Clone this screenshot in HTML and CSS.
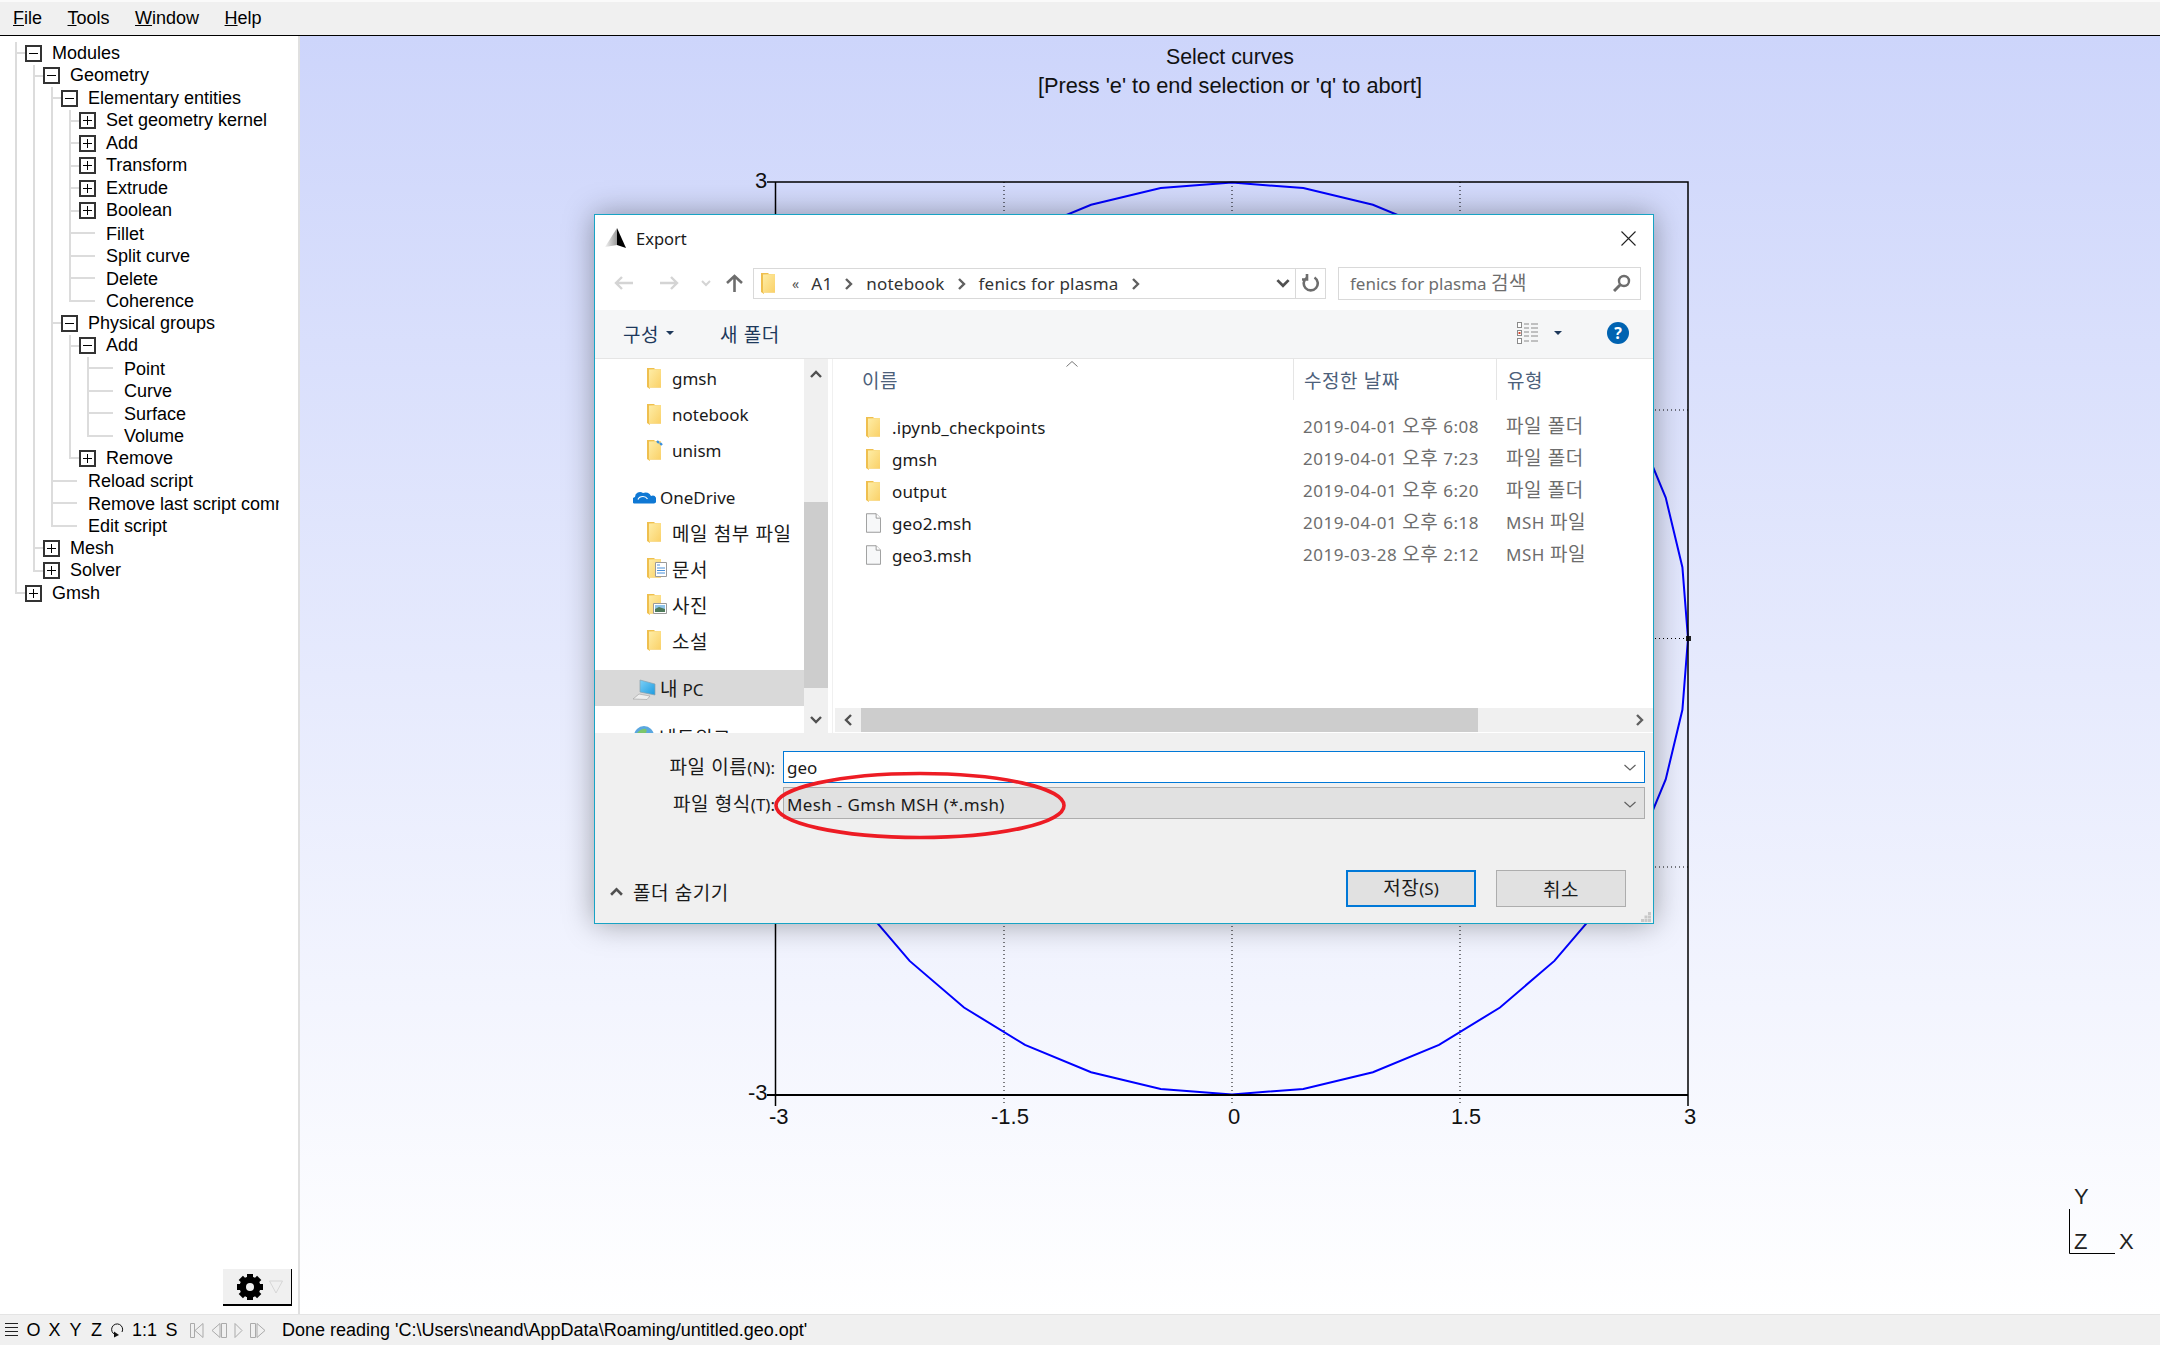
FILE: index.html
```html
<!DOCTYPE html>
<html lang="ko">
<head>
  <meta charset="UTF-8" />
  <title>Gmsh</title>
  <link rel="stylesheet" href="styles.css">
</head>
<body>

  <!-- shared icons -->
  <svg class="sprite" aria-hidden="true">
    <defs>
      <linearGradient id="folderFront" x1="0" y1="0" x2="1" y2="1">
        <stop offset="0" stop-color="#feeda6"/>
        <stop offset="1" stop-color="#fad066"/>
      </linearGradient>
      <linearGradient id="sail" x1="0" y1="0" x2="1" y2="0">
        <stop offset="0" stop-color="#f4f4f4"/>
        <stop offset="1" stop-color="#9a9a9a"/>
      </linearGradient>
      <linearGradient id="screen" x1="0" y1="0" x2="1" y2="1">
        <stop offset="0" stop-color="#7cd0f7"/>
        <stop offset="1" stop-color="#1d9be0"/>
      </linearGradient>
    </defs>
    <symbol id="folder" viewBox="0 0 15 21">
      <path d="M0 0h7l1 1h6v18.500H3V21L0 19z" fill="#efbf4e"/>
      <path d="M2 1.500l12-.5v18.500H2.500L2 20.500z" fill="url(#folderFront)"/>
    </symbol>
    <symbol id="doc" viewBox="0 0 17 22">
      <path d="M.5.500h11l5 5v16H.5z" fill="#f7f8f9" stroke="#8f8f8f"/>
      <path d="M11.500.500v5h5" fill="#fff" stroke="#8f8f8f"/>
    </symbol>
    <symbol id="chevron-up" viewBox="0 0 12 8">
      <path d="M1 7l5-5 5 5" fill="none" stroke="#505050" stroke-width="2.400"/>
    </symbol>
    <symbol id="chevron-down" viewBox="0 0 12 8">
      <path d="M1 1l5 5 5-5" fill="none" stroke="#505050" stroke-width="2.400"/>
    </symbol>
    <symbol id="chevron-left" viewBox="0 0 8 12">
      <path d="M7 1L2 6l5 5" fill="none" stroke="#505050" stroke-width="2.400"/>
    </symbol>
    <symbol id="chevron-right" viewBox="0 0 8 12">
      <path d="M1 1l5 5-5 5" fill="none" stroke="#606060" stroke-width="2.400"/>
    </symbol>
    <symbol id="combo-arrow" viewBox="0 0 12 7">
      <path d="M.5 1l5.500 5 5.500-5" fill="none" stroke="#606060" stroke-width="1.200"/>
    </symbol>
  </svg>

  <div class="menubar">
    <span class="menu-item"><u>F</u>ile</span>
    <span class="menu-item"><u>T</u>ools</span>
    <span class="menu-item"><u>W</u>indow</span>
    <span class="menu-item"><u>H</u>elp</span>
  </div>

  <div class="main">

    <div class="tree-panel">
      <ul class="tree">
        <li>
          <div class="row"><span class="toggle"></span>Modules</div>
          <ul>
            <li>
              <div class="row"><span class="toggle"></span>Geometry</div>
              <ul>
                <li>
                  <div class="row"><span class="toggle"></span>Elementary entities</div>
                  <ul>
                    <li><div class="row"><span class="toggle plus"></span>Set geometry kernel</div></li>
                    <li><div class="row"><span class="toggle plus"></span>Add</div></li>
                    <li><div class="row"><span class="toggle plus"></span>Transform</div></li>
                    <li><div class="row"><span class="toggle plus"></span>Extrude</div></li>
                    <li><div class="row"><span class="toggle plus"></span>Boolean</div></li>
                    <li><div class="row leaf">Fillet</div></li>
                    <li><div class="row leaf">Split curve</div></li>
                    <li><div class="row leaf">Delete</div></li>
                    <li><div class="row leaf">Coherence</div></li>
                  </ul>
                </li>
                <li>
                  <div class="row"><span class="toggle"></span>Physical groups</div>
                  <ul>
                    <li>
                      <div class="row"><span class="toggle"></span>Add</div>
                      <ul>
                        <li><div class="row leaf">Point</div></li>
                        <li><div class="row leaf">Curve</div></li>
                        <li><div class="row leaf">Surface</div></li>
                        <li><div class="row leaf">Volume</div></li>
                      </ul>
                    </li>
                    <li><div class="row"><span class="toggle plus"></span>Remove</div></li>
                  </ul>
                </li>
                <li><div class="row leaf">Reload script</div></li>
                <li><div class="row leaf">Remove last script command</div></li>
                <li><div class="row leaf">Edit script</div></li>
              </ul>
            </li>
            <li><div class="row"><span class="toggle plus"></span>Mesh</div></li>
            <li><div class="row"><span class="toggle plus"></span>Solver</div></li>
          </ul>
        </li>
        <li><div class="row"><span class="toggle plus"></span>Gmsh</div></li>
      </ul>

      <div class="gear-btn">
        <svg width="26" height="26" viewBox="0 0 26 26">
          <circle cx="13" cy="13" r="7.500" fill="none" stroke="#000" stroke-width="6"/>
          <g fill="#000">
            <rect x="10" y="0" width="6" height="26"/>
            <rect x="10" y="0" width="6" height="26" transform="rotate(45 13 13)"/>
            <rect x="10" y="0" width="6" height="26" transform="rotate(90 13 13)"/>
            <rect x="10" y="0" width="6" height="26" transform="rotate(135 13 13)"/>
          </g>
          <circle cx="13" cy="13" r="4" fill="#f0f0f0"/>
        </svg>
        <svg width="14" height="14" viewBox="0 0 14 14">
          <path d="M.5 1h13L7 13z" fill="none" stroke="#d6d6d6"/>
        </svg>
      </div>
    </div>

    <div class="canvas">
      <svg class="plot" viewBox="300 36 1860 1278">
        <text class="plot-label" x="1230" y="64" text-anchor="middle" textLength="128" lengthAdjust="spacingAndGlyphs">Select curves</text>
        <text class="plot-label" x="1230" y="93" text-anchor="middle" textLength="384" lengthAdjust="spacingAndGlyphs">[Press 'e' to end selection or 'q' to abort]</text>

        <g class="grid">
          <path d="M1004 182V1106M1232 182V1106M1460 182V1106"/>
          <path d="M775 410H1688M775 638.500H1688M775 867H1688"/>
        </g>
        <polygon class="curve" points="1232,182.500 1303.300,188.100 1372.900,204.800 1439,232.100 1500,269.500 1554.400,316.100 1600.900,370.500 1638.300,431.500 1665.700,497.600 1682.400,567.200 1688,638.500 1682.400,709.800 1665.700,779.400 1638.300,845.500 1600.900,906.500 1554.400,960.900 1500,1007.500 1439,1044.900 1372.900,1072.200 1303.300,1088.900 1232,1094.500 1160.700,1088.900 1091.100,1072.200 1025,1044.900 964,1007.500 909.600,960.900 863.100,906.500 825.700,845.500 798.300,779.400 781.600,709.800 776,638.500 781.600,567.200 798.300,497.600 825.700,431.500 863.100,370.500 909.600,316.100 964,269.500 1025,232.100 1091.100,204.800 1160.700,188.100"/>
        <rect x="1686" y="636" width="5" height="5" fill="#222"/>
        <path class="axis" d="M767 182H1688V1106M775.500 182V1106"/>
        <path class="axis thick" d="M767 1095H1688"/>

        <text class="plot-label" x="755" y="188">3</text>
        <text class="plot-label" x="748" y="1100">-3</text>
        <text class="plot-label" x="769" y="1124">-3</text>
        <text class="plot-label" x="991" y="1124" textLength="38" lengthAdjust="spacingAndGlyphs">-1.5</text>
        <text class="plot-label" x="1228" y="1124">0</text>
        <text class="plot-label" x="1451" y="1124" textLength="30" lengthAdjust="spacingAndGlyphs">1.5</text>
        <text class="plot-label" x="1684" y="1124">3</text>

        <path class="axis thin" d="M2069.500 1209V1253.500H2115"/>
        <text class="gizmo-label" x="2074" y="1204">Y</text>
        <text class="gizmo-label" x="2074" y="1249">Z</text>
        <text class="gizmo-label" x="2119" y="1249">X</text>
      </svg>

      <div class="dialog">
        <div class="dlg-title">
          <svg class="dlg-logo" width="25" height="21" viewBox="0 0 25 21">
            <path d="M12 0L0 19l12-2z" fill="url(#sail)"/>
            <path d="M12 0l9 20-9-3z" fill="#000"/>
          </svg>
          <span>Export</span>
          <svg class="dlg-close" width="15" height="15" viewBox="0 0 15 15">
            <path d="M.5.500l14 14M14.500.500l-14 14" stroke="#222" stroke-width="1.100"/>
          </svg>
        </div>

        <div class="dlg-nav">
          <svg class="nav-back" width="19" height="14" viewBox="0 0 19 14"><path d="M19 7H3M8 1L2 7l6 6" fill="none" stroke="#d4d4d4" stroke-width="2.400"/></svg>
          <svg class="nav-forward" width="19" height="14" viewBox="0 0 19 14"><path d="M0 7h16M11 1l6 6-6 6" fill="none" stroke="#d4d4d4" stroke-width="2.400"/></svg>
          <svg class="nav-recent" width="10" height="7" viewBox="0 0 10 7"><path d="M1 1l4 4 4-4" fill="none" stroke="#d4d4d4" stroke-width="2"/></svg>
          <svg class="nav-up" width="17" height="18" viewBox="0 0 17 18"><path d="M8.500 18V3M1 9l7.500-7L16 9" fill="none" stroke="#6d6d6d" stroke-width="2.600"/></svg>

          <div class="address">
            <svg class="address-folder" width="15" height="21"><use href="#folder"/></svg>
            <span class="crumb-more">«</span>
            <span>A1</span>
            <svg class="crumb-sep" width="8" height="12"><use href="#chevron-right"/></svg>
            <span>notebook</span>
            <svg class="crumb-sep" width="8" height="12"><use href="#chevron-right"/></svg>
            <span>fenics for plasma</span>
            <svg class="crumb-sep" width="8" height="12"><use href="#chevron-right"/></svg>
            <svg class="address-drop" width="14" height="9"><use href="#chevron-down"/></svg>
            <span class="address-refresh">
              <svg width="18" height="18" viewBox="0 0 18 18"><path d="M5 3.500a7 7 0 1 0 7.500 0M5 0v5.500H0" fill="none" stroke="#6d6d6d" stroke-width="2.600"/></svg>
            </span>
          </div>

          <div class="search">
            <span>fenics for plasma <span class="ko">검색</span></span>
            <svg width="18" height="18" viewBox="0 0 18 18"><circle cx="11" cy="7" r="5" fill="none" stroke="#6d6d6d" stroke-width="2.400"/><path d="M7 11l-6 6" stroke="#6d6d6d" stroke-width="3"/></svg>
          </div>
        </div>

        <div class="dlg-toolbar">
          <span class="tool"><span class="ko">구성</span><i class="caret"></i></span>
          <span class="tool new-folder"><span class="ko">새 폴더</span></span>
          <svg class="view-icon" width="22" height="22" viewBox="0 0 22 22">
            <g fill="#fff" stroke="#8a8a8a"><rect x=".5" y=".5" width="4" height="5"/><rect x=".5" y="8.500" width="4" height="5"/><rect x=".5" y="16.500" width="4" height="5"/></g>
            <rect x="1.500" y="10" width="2" height="2" fill="#d9442b"/>
            <path d="M7 2h5M14 2h7M7 6h5M14 6h7M7 10h5M14 10h7M7 14h5M14 14h7M7 19h5M14 19h7" stroke="#8a8a8a"/>
          </svg>
          <i class="caret view-caret"></i>
          <span class="help">?</span>
        </div>

        <div class="dlg-body">
          <div class="side">
            <div class="side-row sub"><svg width="15" height="21"><use href="#folder"/></svg>gmsh</div>
            <div class="side-row sub"><svg width="15" height="21"><use href="#folder"/></svg>notebook</div>
            <div class="side-row sub">
              <svg width="18" height="21" viewBox="0 0 18 21"><use href="#folder" width="15" height="21"/><path d="M10 1l2 2M13 3l2 2" stroke="#3b8fdc" stroke-width="2.400"/></svg><span class="side-unism">unism</span>
            </div>
            <div class="side-row root onedrive">
              <svg width="23" height="14" viewBox="0 0 23 14"><path d="M1 13.500a3.500 3.500 0 0 1 1-6.500 5 5 0 0 1 8-4 6 6 0 0 1 8 3 4 4 0 0 1 3 7.500z" fill="#0f78d4"/><path d="M5 9.500q1-3 5-3 3 0 4.500 2.500" fill="none" stroke="#fff" stroke-width="1.200"/></svg>OneDrive
            </div>
            <div class="side-row sub"><svg width="15" height="21"><use href="#folder"/></svg><span class="ko">메일 첨부 파일</span></div>
            <div class="side-row sub">
              <svg width="20" height="21" viewBox="0 0 20 21"><use href="#folder" width="15" height="21"/><path d="M8.500 4.500h11v14h-11z" fill="#fff" stroke="#9a9a9a"/><path d="M10 7h3M10 10h8M10 12.500h8M10 15h8" stroke="#4a90d9"/></svg><span class="ko">문서</span>
            </div>
            <div class="side-row sub">
              <svg width="20" height="21" viewBox="0 0 20 21"><use href="#folder" width="15" height="21"/><path d="M6.500 9.500h13v10h-13z" fill="#fff" stroke="#9a9a9a"/><path d="M8 11h10v4H8z" fill="#8fc4ea"/><path d="M8 15l4-2 6 2v3H8z" fill="#4d7a5a"/></svg><span class="ko">사진</span>
            </div>
            <div class="side-row sub"><svg width="15" height="21"><use href="#folder"/></svg><span class="ko">소설</span></div>
            <div class="side-row root this-pc">
              <svg width="23" height="21" viewBox="0 0 23 21"><path d="M7 1l15 4v11L7 13z" fill="url(#screen)" stroke="#8aa0ad" stroke-width=".7"/><path d="M0 20l6-5 11 2-3 3.500z" fill="#eee" stroke="#a8a8a8" stroke-width=".7"/></svg><span><span class="ko">내</span> PC</span>
            </div>
            <div class="side-row root network">
              <svg width="22" height="22" viewBox="0 0 22 22"><circle cx="11" cy="11" r="10" fill="#5aa7e0"/><path d="M4 8q5-5 9-4 2 3-2 5-4 0-7-1z" fill="#7cc66a"/></svg><span class="ko">네트워크</span>
            </div>
          </div>

          <div class="vbar">
            <span class="vbar-btn"><svg width="12" height="8"><use href="#chevron-up"/></svg></span>
            <div class="vbar-thumb"></div>
            <span class="vbar-btn vbar-down"><svg width="12" height="8"><use href="#chevron-down"/></svg></span>
          </div>

          <div class="list">
            <div class="list-head">
              <span class="col-name ko">이름</span>
              <span class="col-date ko">수정한 날짜</span>
              <span class="col-type ko">유형</span>
              <svg class="sort-arrow" width="12" height="6" viewBox="0 0 12 6"><path d="M.5 5.500L6 .5l5.500 5" fill="none" stroke="#777"/></svg>
            </div>
            <div class="list-rows">
              <div class="file-row">
                <span class="file-name"><svg width="15" height="21"><use href="#folder"/></svg>.ipynb_checkpoints</span>
                <span class="file-meta">2019-04-01 <span class="ko">오후</span> 6:08</span>
                <span class="file-meta"><span class="ko">파일 폴더</span></span>
              </div>
              <div class="file-row">
                <span class="file-name"><svg width="15" height="21"><use href="#folder"/></svg>gmsh</span>
                <span class="file-meta">2019-04-01 <span class="ko">오후</span> 7:23</span>
                <span class="file-meta"><span class="ko">파일 폴더</span></span>
              </div>
              <div class="file-row">
                <span class="file-name"><svg width="15" height="21"><use href="#folder"/></svg>output</span>
                <span class="file-meta">2019-04-01 <span class="ko">오후</span> 6:20</span>
                <span class="file-meta"><span class="ko">파일 폴더</span></span>
              </div>
              <div class="file-row">
                <span class="file-name"><svg width="17" height="22"><use href="#doc"/></svg>geo2.msh</span>
                <span class="file-meta">2019-04-01 <span class="ko">오후</span> 6:18</span>
                <span class="file-meta">MSH <span class="ko">파일</span></span>
              </div>
              <div class="file-row">
                <span class="file-name"><svg width="17" height="22"><use href="#doc"/></svg>geo3.msh</span>
                <span class="file-meta">2019-03-28 <span class="ko">오후</span> 2:12</span>
                <span class="file-meta">MSH <span class="ko">파일</span></span>
              </div>
            </div>
            <div class="hbar">
              <span class="hbar-btn"><svg width="8" height="12"><use href="#chevron-left"/></svg></span>
              <div class="hbar-thumb"></div>
              <span class="hbar-right"><svg width="8" height="12"><use href="#chevron-right"/></svg></span>
            </div>
          </div>
        </div>

        <div class="dlg-footer">
          <div class="form-grid">
            <label class="form-label"><span class="ko">파일 이름</span>(N):</label>
            <div class="combo combo-name">geo<svg width="12" height="7"><use href="#combo-arrow"/></svg></div>
            <label class="form-label form-label-type"><span class="ko">파일 형식</span>(T):</label>
            <div class="combo combo-type"><span>Mesh - Gmsh MSH (*.msh)</span><svg width="12" height="7"><use href="#combo-arrow"/></svg></div>
          </div>
          <div class="dlg-actions">
            <span class="hide-folders"><svg width="13" height="9"><use href="#chevron-up" width="13" height="9"/></svg><span class="ko">폴더 숨기기</span></span>
            <span class="btn btn-default"><span><span class="ko">저장</span>(S)</span></span>
            <span class="btn"><span class="ko">취소</span></span>
          </div>
        </div>

        <svg class="annotation" width="296" height="72" viewBox="0 0 296 72">
          <ellipse cx="148" cy="35.500" rx="144" ry="32" fill="none" stroke="#ed1c24" stroke-width="3.600"/>
        </svg>
        <svg class="grip" width="10" height="11" viewBox="0 0 10 11">
          <path d="M7 1h3v3H7zM3.500 4.500h3v3h-3zM7 4.500h3v3H7zM0 8h3v3H0zM3.500 8h3v3h-3zM7 8h3v3H7z" fill="#c8c8c8"/>
        </svg>
      </div>
    </div>
  </div>

  <div class="statusbar">
    <svg class="sb-menu" width="13" height="14" viewBox="0 0 13 14"><path d="M0 .5h13M0 4.500h13M0 8.500h13M0 12.500h13" stroke="#222"/></svg>
    <span class="sb-btn">O</span>
    <span class="sb-btn">X</span>
    <span class="sb-btn">Y</span>
    <span class="sb-btn">Z</span>
    <span class="sb-btn">
      <svg width="13" height="15" viewBox="0 0 13 15"><path d="M4 11.500A5.500 5.500 0 1 1 11 9" fill="none" stroke="#111"/><path d="M3 8.500l5 3.500-5 2.500z" fill="#111"/></svg>
    </span>
    <span class="sb-btn sb-scale">1:1</span>
    <span class="sb-btn">S</span>
    <span class="sb-play">
      <svg width="14" height="15" viewBox="0 0 14 15"><path d="M.5.500h4v14h-4zM13 .5L5 7.500l8 7z" fill="none" stroke="#aaa"/></svg>
      <svg width="16" height="15" viewBox="0 0 16 15"><path d="M9 .5L1 7.500l8 7zM10.500.500h5v14h-5z" fill="none" stroke="#aaa"/></svg>
      <svg width="9" height="15" viewBox="0 0 9 15"><path d="M1 .5l7 7-7 7z" fill="none" stroke="#aaa"/></svg>
      <svg width="16" height="15" viewBox="0 0 16 15"><path d="M.5.500h5v14h-5zM7 .5l8 7-8 7z" fill="none" stroke="#aaa"/></svg>
    </span>
    <span class="sb-message">Done reading 'C:\Users\neand\AppData\Roaming/untitled.geo.opt'</span>
  </div>

</body>
</html>
```

FILE: styles.css
```css
* {
  box-sizing: border-box;
}

body {
  margin: 0;
  height: 100vh;
  display: flex;
  flex-direction: column;
  overflow: hidden;
  background: #fff;
  color: #000;
  font-family: "Liberation Sans", Arial, sans-serif;
  font-size: 18px;
}

.sprite {
  position: absolute;
  width: 0;
  height: 0;
}

svg {
  flex: none;
  display: block;
}

/* menu */
.menubar {
  height: 36px;
  flex: none;
  display: flex;
  align-items: center;
  gap: 25.5px;
  padding: 0 13px;
  background: #f0f0f0;
  border-top: 2px solid #fafafa;
  border-bottom: 1px solid #000;
}

.main {
  flex: 1;
  display: flex;
  min-height: 0;
}

/* tree on the left */
.tree-panel {
  width: 300px;
  flex: none;
  display: flex;
  flex-direction: column;
  background: #fff;
  border-right: 2px solid #e0e0e0;
}

.tree {
  width: 279px;
  padding: 6px 0 0 15px;
  overflow: hidden;
}

.tree,
.tree ul {
  list-style: none;
  margin: 0;
}

.tree ul {
  padding: 0 0 0 18px;
}

.tree li {
  position: relative;
  white-space: nowrap;
}

/* vertical guide */
.tree li::before {
  content: "";
  position: absolute;
  left: 0;
  top: 0;
  bottom: 0;
  width: 2px;
  background: #dcdcdc;
}

.tree li:last-child::before {
  bottom: auto;
  height: 12px;
}

.row {
  position: relative;
  height: 22.5px;
  display: flex;
  align-items: center;
  gap: 10px;
  padding-left: 10px;
}

/* horizontal stub */
.row::before {
  content: "";
  position: absolute;
  left: 0;
  top: 10px;
  width: 10px;
  height: 2px;
  background: #dcdcdc;
}

.row.leaf {
  padding-left: 37px;
  padding-top: 2px;
}

.row.leaf::before {
  width: 26px;
}

.toggle {
  position: relative;
  z-index: 1;
  width: 17px;
  height: 17px;
  flex: none;
  border: 2px solid #333;
  background: linear-gradient(#000, #000) center / 9px 1px no-repeat, #fff;
}

.toggle.plus {
  background: linear-gradient(#000, #000) center / 9px 1px no-repeat,
    linear-gradient(#000, #000) center / 1px 9px no-repeat, #fff;
}

.gear-btn {
  width: 69px;
  height: 37px;
  margin: auto 6px 8px auto;
  display: flex;
  align-items: center;
  gap: 6px;
  padding-left: 14px;
  background: #f0f0f0;
  border-right: 1px solid #000;
  border-bottom: 2px solid #000;
}

/* graphics area */
.canvas {
  position: relative;
  flex: 1;
  background: linear-gradient(#cdd5fb, #ffffff);
}

.plot {
  position: absolute;
  left: 0;
  top: 0;
  width: 100%;
  height: 100%;
}

.plot-label {
  font-size: 22px;
  fill: #111;
}

.gizmo-label {
  font-size: 22px;
  fill: #222;
}

.grid path {
  fill: none;
  stroke: #000;
  stroke-width: 1;
  stroke-dasharray: 1 3;
}

.curve {
  fill: none;
  stroke: #0000ff;
  stroke-width: 2;
}

.axis {
  fill: none;
  stroke: #000;
  stroke-width: 1.500;
}

.axis.thin {
  stroke-width: 1;
}

.axis.thick {
  stroke-width: 2;
}

/* file dialog */
.dialog {
  position: absolute;
  left: 294px;
  top: 178px;
  width: 1060px;
  height: 710px;
  display: flex;
  flex-direction: column;
  background: #fff;
  border: 1px solid #18a3c4;
  box-shadow: 0 0 28px rgba(0, 0, 0, 0.35);
  font-family: "Noto Sans", "Noto Sans CJK KR", sans-serif;
  font-size: 17px;
  color: #1a1a1a;
}

/* hangul runs wider than the latin around it */
.ko {
  font-family: "Noto Sans CJK KR", sans-serif;
  font-size: 19px;
  letter-spacing: 0.5px;
  line-height: 1;
}

.dlg-title {
  height: 46px;
  flex: none;
  display: flex;
  align-items: center;
  padding: 0 17px 0 10px;
  gap: 6px;
  font-size: 16.5px;
}

.dlg-close {
  margin-left: auto;
}

.dlg-nav {
  height: 49px;
  flex: none;
  display: flex;
  align-items: center;
  padding: 0 12px 5px 19px;
}

.nav-forward {
  margin-left: 27px;
}

.nav-recent {
  margin-left: 22px;
}

.nav-up {
  margin-left: 15px;
}

.address {
  width: 573px;
  height: 31px;
  margin-left: 10px;
  display: flex;
  align-items: center;
  gap: 13px;
  padding-left: 7px;
  border: 1px solid #d9d9d9;
  color: #333;
  letter-spacing: 0.2px;
}

.address-folder {
  width: 15px;
}

.crumb-more {
  margin: 0 -1px 0 3px;
  font-size: 14px;
  color: #555;
}

.crumb-sep {
  margin-top: 1px;
}

.address-drop {
  margin-left: auto;
  margin-right: -8px;
}

.address-refresh {
  width: 30px;
  height: 100%;
  display: flex;
  align-items: center;
  justify-content: center;
  border-left: 1px solid #d9d9d9;
}

.search {
  width: 303px;
  height: 33px;
  margin-left: 12px;
  display: flex;
  align-items: center;
  justify-content: space-between;
  padding: 0 9px 0 11px;
  border: 1px solid #d9d9d9;
  color: #6d6d6d;
}

.dlg-toolbar {
  height: 49px;
  flex: none;
  display: flex;
  align-items: center;
  padding: 0 24px 2px 28px;
  background: #f5f6f7;
  border-bottom: 1px solid #e5e5e5;
  color: #1e395b;
}

.tool {
  display: flex;
  align-items: center;
}

.caret {
  width: 0;
  height: 0;
  margin-left: 7px;
  border-left: 4px solid transparent;
  border-right: 4px solid transparent;
  border-top: 4px solid #1e395b;
}

.new-folder {
  margin-left: 46px;
}

.view-icon {
  margin-left: auto;
}

.view-caret {
  margin-left: 15px;
}

.help {
  width: 22px;
  height: 22px;
  margin-left: 45px;
  display: flex;
  align-items: center;
  justify-content: center;
  border-radius: 50%;
  background: #0063b1;
  color: #fff;
  font-weight: bold;
  font-size: 16px;
}

.dlg-body {
  height: 374px;
  flex: none;
  display: flex;
}

.side {
  width: 209px;
  flex: none;
  padding-top: 1px;
  overflow: hidden;
}

.side-row {
  height: 36px;
  display: flex;
  align-items: center;
}

.side-row.sub {
  padding-left: 52px;
}

.side-row.sub svg {
  margin-right: 10px;
}

.side-row.sub svg[width="18"],
.side-row.sub svg[width="20"] {
  margin-right: 5px;
}

.side-unism {
  margin-left: 2px;
}

.side-row.root {
  padding-left: 38px;
  gap: 4px;
}

.side-row.onedrive {
  height: 34px;
  margin-top: 12px;
}

.side-row.this-pc {
  margin-top: 12px;
  padding-top: 2px;
  background: #d9d9d9;
}

.side-row.network {
  margin-top: 12px;
}

.vbar {
  width: 24px;
  flex: none;
  display: flex;
  flex-direction: column;
  background: #f0f0f0;
}

.vbar-btn {
  height: 30px;
  flex: none;
  display: flex;
  align-items: center;
  justify-content: center;
}

.vbar-thumb {
  height: 186px;
  margin-top: 113px;
  background: #cdcdcd;
}

.vbar-down {
  height: 26px;
  margin-top: auto;
}

.list {
  flex: 1;
  min-width: 0;
  margin-left: 4px;
  display: flex;
  flex-direction: column;
  border-left: 1px solid #f0f0f0;
}

.list-head {
  position: relative;
  height: 41px;
  flex: none;
  display: grid;
  grid-template-columns: 460px 203px 1fr;
  color: #4c607a;
}

.list-head span {
  display: flex;
  align-items: center;
}

.col-name {
  padding-left: 29px;
}

.col-date,
.col-type {
  padding-left: 10px;
  border-left: 1px solid #e5e5e5;
}

.sort-arrow {
  position: absolute;
  left: 233px;
  top: 2px;
}

.list-rows {
  flex: 1;
  padding-top: 11px;
}

.file-row {
  height: 32px;
  display: grid;
  grid-template-columns: 460px 203px 1fr;
  align-items: center;
}

.file-name {
  display: flex;
  align-items: center;
  padding-left: 33px;
  letter-spacing: 0.1px;
}

.file-name svg {
  width: 26px;
  padding-right: 11px;
  overflow: visible;
}

.file-meta {
  margin-top: -2px;
  padding-left: 10px;
  color: #6d6d6d;
  letter-spacing: 0.55px;
}

.hbar {
  height: 24px;
  flex: none;
  margin: 0 0 1px 2px;
  display: flex;
  align-items: center;
  background: #f0f0f0;
}

.hbar-btn {
  width: 26px;
  display: flex;
  justify-content: center;
}

.hbar-thumb {
  width: 617px;
  height: 100%;
  background: #cdcdcd;
}

.hbar-right {
  margin-left: auto;
  margin-right: 9px;
}

.dlg-footer {
  flex: 1;
  display: flex;
  flex-direction: column;
  padding: 18px 27px 16px 15px;
  background: #f0f0f0;
}

.form-grid {
  display: grid;
  grid-template-columns: 165px 862px;
  column-gap: 8px;
  row-gap: 4px;
  align-items: center;
}

.form-label {
  padding-top: 1px;
  text-align: right;
  white-space: nowrap;
}

.form-label-type {
  padding-top: 3px;
}

.combo {
  height: 32px;
  display: flex;
  align-items: center;
  justify-content: space-between;
  padding: 0 8px 0 3px;
  font-size: 17px;
}

.combo-name {
  padding-top: 1px;
  background: #fff;
  border: 1px solid #0078d7;
}

.combo-type {
  padding-top: 2px;
  letter-spacing: 0.35px;
  background: #e1e1e1;
  border: 1px solid #adadad;
}

.dlg-actions {
  margin-top: auto;
  display: flex;
  align-items: center;
  gap: 20px;
}

.hide-folders {
  margin-top: 6px;
  margin-right: auto;
  display: flex;
  align-items: center;
  gap: 10px;
}

.btn {
  width: 130px;
  height: 37px;
  display: flex;
  align-items: center;
  justify-content: center;
  background: #e1e1e1;
  border: 1px solid #adadad;
}

.btn-default {
  border: 2px solid #0078d7;
}

.annotation {
  position: absolute;
  left: 177px;
  top: 555px;
}

.grip {
  position: absolute;
  right: 2px;
  bottom: 1px;
}

/* status bar */
.statusbar {
  height: 31px;
  flex: none;
  display: flex;
  align-items: center;
  padding-left: 5px;
  background: #f0f0f0;
  border-top: 1px solid #e4e4e4;
  white-space: nowrap;
}

.sb-menu {
  margin-right: 5px;
}

.sb-btn {
  width: 21px;
  display: flex;
  justify-content: center;
}

.sb-scale {
  width: 33px;
}

.sb-play {
  width: 100px;
  display: flex;
  align-items: center;
  gap: 7px;
  padding-left: 8px;
}

.sb-message {
  padding-top: 1px;
}
```
